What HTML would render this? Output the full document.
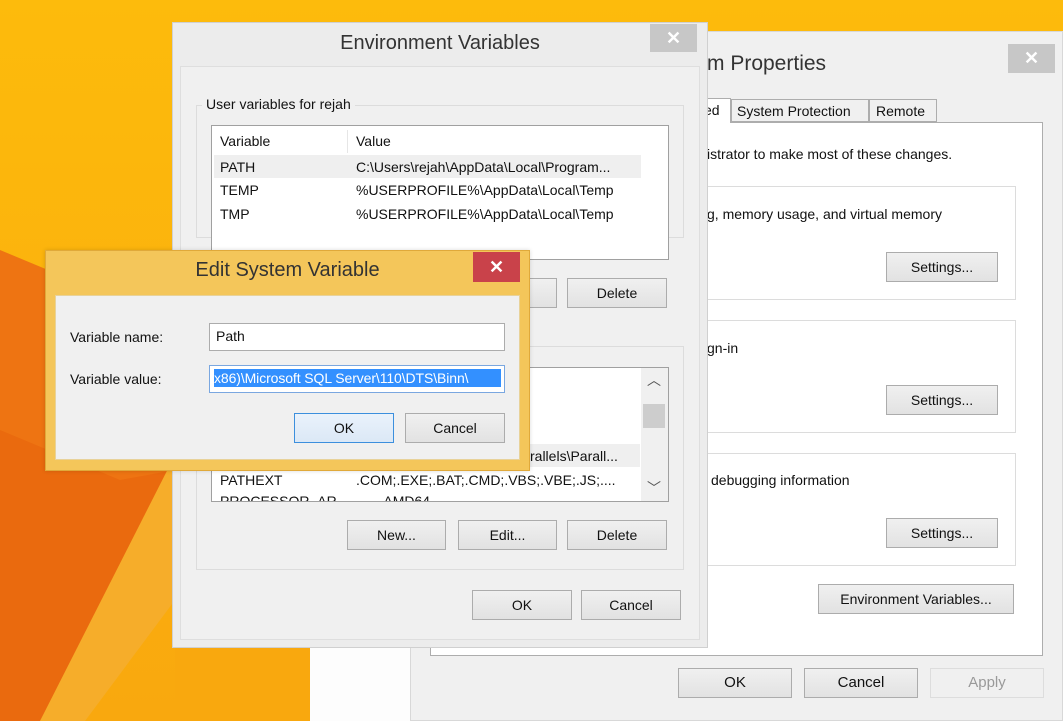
<!DOCTYPE html>
<html><head><style>
*{margin:0;padding:0;box-sizing:border-box}
body{width:1063px;height:721px;overflow:hidden;position:relative;font-family:"Liberation Sans",sans-serif;font-size:14px;color:#111;background:#fbb514}
.a{position:absolute}
.btn{position:absolute;background:linear-gradient(#f0f0f0,#e2e2e2);border:1px solid #acacac;text-align:center;font-size:14px;color:#111}
.grp{position:absolute;border:1px solid #dcdcdc}
.x{position:absolute;background:#c7c7c7;color:#fff;text-align:center;font-size:18px;font-weight:bold}
</style></head><body>
<svg class="a" style="left:0;top:0" width="1063" height="721">
<defs><linearGradient id="g" x1="0" y1="0" x2="0" y2="1"><stop offset="0" stop-color="#fdbb0c"/><stop offset="1" stop-color="#f9a80e"/></linearGradient></defs>
<rect width="1063" height="721" fill="url(#g)"/>
<polygon points="0,250 60,275 175,470 175,480 40,721 0,721" fill="#ee7412"/>
<polygon points="0,430 120,480 175,470 40,721 0,721" fill="#ea6a0e"/>
<polygon points="175,455 175,600 85,721 40,721" fill="#f6ad2a"/>
<rect x="175" y="640" width="135" height="81" fill="#f9a80e"/>
<rect x="310" y="645" width="100" height="76" fill="#fdfdfd"/>
</svg>
<!-- System Properties -->
<div class="a" style="left:410px;top:31px;width:653px;height:690px;background:#f0f0f0;border:1px solid #d8d8d8"></div>
<div class="a" style="left:707px;top:52px;font-size:21px;color:#333">m Properties</div>
<div class="x" style="left:1008px;top:44px;width:47px;height:29px;line-height:29px">✕</div>
<div class="a" style="left:430px;top:122px;width:613px;height:534px;background:#fff;border:1px solid #adadad"></div>
<div class="a" style="left:700px;top:98px;width:31px;height:25px;background:#fff;border:1px solid #adadad;border-bottom:none;padding:3px 0 0 3px;font-size:14px">ed</div>
<div class="a" style="left:731px;top:99px;width:138px;height:23px;background:#f0f0f0;border:1px solid #adadad;padding:3px 5px;font-size:14px">System Protection</div>
<div class="a" style="left:869px;top:99px;width:68px;height:23px;background:#f0f0f0;border:1px solid #adadad;padding:3px 6px;font-size:14px">Remote</div>
<div class="a" style="left:707px;top:146px;font-size:14px">istrator to make most of these changes.</div>
<div class="grp" style="left:700px;top:186px;width:316px;height:114px"></div>
<div class="a" style="left:707px;top:206px">g, memory usage, and virtual memory</div>
<div class="btn" style="left:886px;top:252px;width:112px;height:30px;line-height:28px">Settings...</div>
<div class="grp" style="left:700px;top:320px;width:316px;height:113px"></div>
<div class="a" style="left:707px;top:340px">gn-in</div>
<div class="btn" style="left:886px;top:385px;width:112px;height:30px;line-height:28px">Settings...</div>
<div class="grp" style="left:700px;top:453px;width:316px;height:113px"></div>
<div class="a" style="left:711px;top:472px">debugging information</div>
<div class="btn" style="left:886px;top:518px;width:112px;height:30px;line-height:28px">Settings...</div>
<div class="btn" style="left:818px;top:584px;width:196px;height:30px;line-height:28px">Environment Variables...</div>
<div class="btn" style="left:678px;top:668px;width:114px;height:30px;line-height:28px;font-size:15px">OK</div>
<div class="btn" style="left:804px;top:668px;width:114px;height:30px;line-height:28px;font-size:15px">Cancel</div>
<div class="btn" style="left:930px;top:668px;width:114px;height:30px;line-height:28px;font-size:15px;color:#999;background:#f0f0f0;border-color:#ddd">Apply</div>
<!-- Environment Variables -->
<div class="a" style="left:172px;top:22px;width:536px;height:626px;background:#ececec;border:1px solid #d0d0d0"></div>
<div class="a" style="left:180px;top:66px;width:520px;height:574px;background:#f0f0f0;border:1px solid #dedede"></div>
<div class="a" style="left:172px;top:32px;width:536px;text-align:center;font-size:20px;color:#333">Environment Variables</div>
<div class="x" style="left:650px;top:24px;width:47px;height:28px;line-height:28px">✕</div>
<div class="grp" style="left:196px;top:105px;width:488px;height:133px"></div>
<div class="a" style="left:202px;top:96px;background:#f0f0f0;padding:0 4px;font-size:14px">User variables for rejah</div>
<div class="a" style="left:211px;top:125px;width:458px;height:135px;background:#fff;border:1px solid #a0a0a0"></div>
<div class="a" style="left:214px;top:130px;width:134px;height:23px;border-right:1px solid #e6e6e6"></div>
<div class="a" style="left:220px;top:133px">Variable</div><div class="a" style="left:356px;top:133px">Value</div>
<div class="a" style="left:214px;top:155px;width:427px;height:23px;background:#efefef"></div>
<div class="a" style="left:220px;top:159px">PATH</div><div class="a" style="left:356px;top:159px">C:\Users\rejah\AppData\Local\Program...</div>
<div class="a" style="left:220px;top:182px">TEMP</div><div class="a" style="left:356px;top:182px">%USERPROFILE%\AppData\Local\Temp</div>
<div class="a" style="left:220px;top:206px">TMP</div><div class="a" style="left:356px;top:206px">%USERPROFILE%\AppData\Local\Temp</div>
<div class="btn" style="left:458px;top:278px;width:99px;height:30px"></div>
<div class="btn" style="left:567px;top:278px;width:100px;height:30px;line-height:28px">Delete</div>
<div class="grp" style="left:196px;top:346px;width:488px;height:224px"></div>
<div class="a" style="left:211px;top:367px;width:458px;height:135px;background:#fff;border:1px solid #a0a0a0;overflow:hidden"></div>
<div class="a" style="left:641px;top:368px;width:27px;height:133px;background:#f0f0f0"></div>
<div class="a" style="left:643px;top:404px;width:22px;height:24px;background:#cdcdcd"></div>
<div class="a" style="left:647px;top:370px;font-size:14px;color:#555">︿</div>
<div class="a" style="left:647px;top:478px;font-size:14px;color:#555">﹀</div>
<div class="a" style="left:214px;top:444px;width:426px;height:23px;background:#efefef"></div>
<div class="a" style="left:530px;top:448px">rallels\Parall...</div>
<div class="a" style="left:220px;top:472px">PATHEXT</div><div class="a" style="left:356px;top:472px">.COM;.EXE;.BAT;.CMD;.VBS;.VBE;.JS;....</div>
<div class="a" style="left:220px;top:494px;height:7px;overflow:hidden;line-height:14px">PROCESSOR_AR &nbsp;&nbsp;&nbsp;&nbsp;&nbsp;&nbsp;&nbsp;&nbsp;&nbsp;&nbsp;&nbsp;AMD64</div>
<div class="btn" style="left:347px;top:520px;width:99px;height:30px;line-height:28px">New...</div>
<div class="btn" style="left:458px;top:520px;width:99px;height:30px;line-height:28px">Edit...</div>
<div class="btn" style="left:567px;top:520px;width:100px;height:30px;line-height:28px">Delete</div>
<div class="btn" style="left:472px;top:590px;width:100px;height:30px;line-height:28px">OK</div>
<div class="btn" style="left:581px;top:590px;width:100px;height:30px;line-height:28px">Cancel</div>
<!-- Edit System Variable -->
<div class="a" style="left:45px;top:250px;width:485px;height:221px;background:#f4c65a;border:1px solid #e0a93a;box-shadow:0 0 4px rgba(0,0,0,.15)"></div>
<div class="a" style="left:45px;top:259px;width:485px;text-align:center;font-size:20px;color:#333">Edit System Variable</div>
<div class="a" style="left:473px;top:252px;width:47px;height:30px;background:#c9424a;color:#fff;text-align:center;line-height:30px;font-size:18px;font-weight:bold">✕</div>
<div class="a" style="left:55px;top:295px;width:465px;height:165px;background:#f0f0f0;border:1px solid #e8d29a"></div>
<div class="a" style="left:70px;top:329px">Variable name:</div>
<div class="a" style="left:70px;top:371px">Variable value:</div>
<div class="a" style="left:209px;top:323px;width:296px;height:28px;background:#fff;border:1px solid #acacac;padding:4px 6px;font-size:14px">Path</div>
<div class="a" style="left:209px;top:365px;width:296px;height:28px;background:#fff;border:1px solid #7aa7e0;padding:3px 4px;overflow:hidden;white-space:nowrap"><span style="background:#3390ff;color:#fff;font-size:14px;display:inline-block;width:287px;padding:1px 0;letter-spacing:-.1px">x86)\Microsoft SQL Server\110\DTS\Binn\</span></div>
<div class="btn" style="left:294px;top:413px;width:100px;height:30px;line-height:28px;border-color:#3c8fdd;background:linear-gradient(#eaf2fb,#dbe8f6)">OK</div>
<div class="btn" style="left:405px;top:413px;width:100px;height:30px;line-height:28px">Cancel</div>
</body></html>
